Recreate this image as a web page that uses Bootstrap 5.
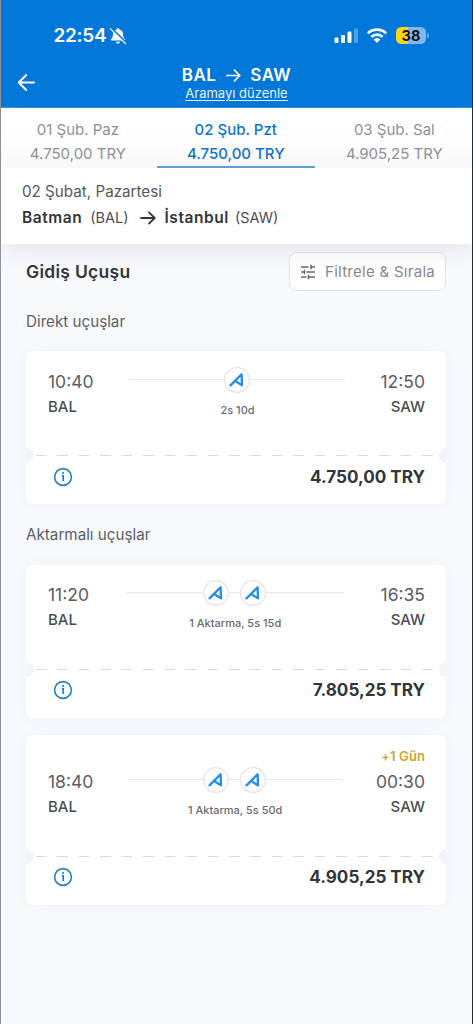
<!DOCTYPE html>
<html lang="tr">
<head>
<meta charset="utf-8">
<meta name="viewport" content="width=device-width, initial-scale=1">
<title>BAL → SAW</title>
<link rel="stylesheet" href="https://cdn.jsdelivr.net/npm/bootstrap@5.3.0/dist/css/bootstrap.min.css">
<style>
body{font-family:Inter,"Liberation Sans",sans-serif;background:#f7f9fd;color:#55575f;font-size:15px;line-height:24px}
.screen{height:1024px;border-left:1px solid #8f9197;border-right:1px solid #25282e;overflow:hidden;white-space:nowrap}
svg{display:block;flex:none}
.top-bar{height:108px;background:#0077d9;color:#fff;border-bottom:1px solid #3c8fd4}
.status-row{height:48px;padding:23px 43px 0 52.5px}
.clock{font-size:19px;font-weight:600;letter-spacing:-.3px}
.battery{width:30px;height:17px;border-radius:5.5px;background:linear-gradient(90deg,#ffd60a 39%,#7fb8ee 39%);color:#111;font-size:14.5px;font-weight:700;line-height:17px}
.battery-tip{width:2px;height:5px;border-radius:0 2px 2px 0;background:#6fb0ea;margin-left:1px}
.title-row{height:59px;padding:16px 0 0 16px}
.route{font-size:17px;font-weight:600;line-height:21px;letter-spacing:.45px}
.edit-link{font-size:13px;line-height:16px;color:#e6f3ff;text-underline-offset:2px;text-decoration-thickness:1px}
.day-tabs{height:60px;background:linear-gradient(#fff 40%,#f8f8f9)}
.day-tab{width:157.5px;padding-top:9.5px;color:#8e9098;border-bottom:2px solid transparent;font-size:15px}
.day-tab:first-child{width:156px}
.day-tab.active{color:#0e74c9;font-weight:500;border-color:#5a9fd6;width:158px}
.trip{height:76px;background:#fff;padding:12px 21px 0;box-shadow:0 3px 24px rgba(40,40,50,.12);position:relative;clip-path:inset(0 0 -40px 0)}
.trip .route-line{margin-top:2px;color:#4a4c54;font-size:14.5px}
.city{font-size:15.5px;letter-spacing:.55px}
.date{font-size:15.2px}
.dark{color:#33353c}
.results{padding:8px 26px 0 25px}
.heading{font-size:17.5px;font-weight:600;letter-spacing:.28px}
.filter-btn{width:157px;height:39px;background:#fff;border:1.5px solid #e3e4e8;border-radius:8px;color:#858790;font-size:15px;letter-spacing:.28px;padding:0 0 0 10px}
.group-label{font-size:15.2px;color:#5d5f67}
.ticket{height:153px;background:#fff;border-radius:8px;box-shadow:0 0 16px rgba(50,60,80,.045);position:relative;padding:18px 21px 0 22px}
.ticket.later{padding-top:17.5px}
.ticket.next-day{height:169.5px;padding-top:9px}
.hour{font-size:17.5px;line-height:26px;color:#5b5d65}
.port{font-size:15px;font-weight:500;line-height:24px;color:#4a4c54;margin-top:-.5px}
.plus{font-size:13px;font-weight:600;line-height:24px;color:#d1a32f;margin-bottom:1px;letter-spacing:.1px}
.path-row{height:26px;background:linear-gradient(#e6e8eb,#e6e8eb) center 12px/100% 1px no-repeat}
.duration{font-size:11px;font-weight:500;line-height:16px;color:#686a72;margin-top:9px;padding-left:1px}
.tear{position:absolute;left:10px;right:13px;bottom:48px;height:1px;background:repeating-linear-gradient(90deg,#d9dadd 0 10.5px,transparent 10.5px 21.45px)}
.notch{position:absolute;width:7.5px;height:15px;background:#f3f4f8;bottom:41px}
.notch.l{left:0;border-radius:0 8px 8px 0}.notch.r{right:0;border-radius:8px 0 0 8px}
.fare{position:absolute;left:26.5px;right:21px;bottom:15.5px;font-size:17.1px;font-weight:700;color:#33353c}
</style>
</head>
<body>
<svg width="0" height="0" class="position-absolute">
<symbol id="airline" viewBox="-13 -13 26 26"><circle r="12.4" fill="#fff" stroke="#e1e4e9" stroke-width="1.2"/><path d="M-6.500 5.400 4.600-5.800 5 5.400-1.400 1.200" fill="none" stroke="#238de9" stroke-width="2.3" stroke-linejoin="round" stroke-linecap="round"/></symbol>
<symbol id="info" viewBox="0 0 20 20"><circle cx="10" cy="10" r="8.4" fill="#fff" stroke="#277fc5" stroke-width="1.6"/><path d="M8.900 8.800H10.200V14" fill="none" stroke="#277fc5" stroke-width="1.700"/><circle cx="10" cy="6" r="1.1" fill="#277fc5"/></symbol>
<symbol id="arrow" viewBox="0 0 16 16"><path d="M1 8H14.500M9 2.300 14.700 8 9 13.700" fill="none" stroke="currentColor" stroke-width="1.8" stroke-linecap="round" stroke-linejoin="round"/></symbol>
</svg>
<main class="screen">
<header class="top-bar">
  <div class="status-row d-flex align-items-center">
    <span class="clock">22:54</span>
    <svg style="margin-left:3px" width="18" height="18" viewBox="0 0 18 18"><path d="M9 1.200c-.9 0-1.400.5-1.500 1.200C5 3.100 3.900 5 3.900 7.400c0 2.700-.8 3.600-1.800 4.700-.7.8-.3 1.500.6 1.500h12.600c.9 0 1.300-.7.6-1.500-1-1.100-1.800-2-1.800-4.700 0-2.400-1.100-4.300-3.600-5C10.400 1.700 9.900 1.200 9 1.200ZM6.700 14.700h4.600c-.3 1.100-1.200 1.800-2.300 1.800s-2-.7-2.300-1.800Z" fill="#fff"/><path d="M2.200 1.200 17 15.500" stroke="#0077d9" stroke-width="2.200"/><path d="M1.300 1.600 16.500 16.500" stroke="#e8f4ff" stroke-width="1.300" stroke-linecap="round"/></svg>
    <svg class="ms-auto" width="24" height="17" viewBox="0 0 24 17"><g fill="#fff"><rect x=".5" y="10.500" width="4" height="5.500" rx="1.200"/><rect x="7" y="8" width="4" height="8" rx="1.200"/><rect x="13.500" y="4.500" width="4" height="11.500" rx="1.200"/><rect x="20" y="1.500" width="4" height="14.500" rx="1.200" opacity=".3"/></g></svg>
    <svg style="margin-left:8px" width="22" height="17" viewBox="0 0 22 17"><path d="M1.800 6.300a13.300 13.300 0 0 1 18.400 0M5.300 9.900a8.200 8.200 0 0 1 11.400 0" fill="none" stroke="#fff" stroke-width="2.700"/><path d="M7.700 12.500a4.800 4.800 0 0 1 6.600 0L11 15.900Z" fill="#fff"/></svg>
    <div class="battery text-center" style="margin-left:8px">38</div><div class="battery-tip"></div>
  </div>
  <div class="title-row d-flex">
    <svg class="mt-2" style="transform:translateY(1px)" width="19" height="19" viewBox="0 0 19 19"><path d="M17 9.500H2M9.200 2 1.800 9.500l7.400 7.500" fill="none" stroke="#fff" stroke-width="2" stroke-linecap="round" stroke-linejoin="round"/></svg>
    <div class="flex-grow-1 text-center" style="padding-right:35px">
      <div class="route d-flex justify-content-center align-items-center" style="padding-top:1px"><span>BAL</span><svg style="margin:0 9px 0 10px" width="15" height="15"><use href="#arrow" width="15" height="15"/></svg><span>SAW</span></div>
      <a class="edit-link d-block" href="#" style="margin-top:-1px">Aramayı düzenle</a>
    </div>
  </div>
</header>
<nav class="day-tabs d-flex text-center">
  <div class="day-tab"><div style="margin-right:2px">01 Şub. Paz<br>4.750,00 TRY</div></div>
  <div class="day-tab active">02 Şub. Pzt<br>4.750,00 TRY</div>
  <div class="day-tab"><div style="margin-left:2px">03 Şub. Sal<br>4.905,25 TRY</div></div>
</nav>
<section class="trip">
  <div class="date">02 Şubat, Pazartesi</div>
  <div class="route-line d-flex align-items-center"><b class="dark fw-semibold city">Batman</b><span style="margin-left:8px">(BAL)</span><svg class="dark" style="margin:0 9px 0 11px" width="16" height="16"><use href="#arrow"/></svg><b class="dark fw-semibold city">İstanbul</b><span style="margin-left:6px">(SAW)</span></div>
</section>
<section class="results">
  <div class="d-flex justify-content-between align-items-center">
    <div class="heading dark">Gidiş Uçuşu</div>
    <button class="filter-btn d-flex align-items-center"><svg width="16" height="16" viewBox="0 0 16 16"><path d="M1 3H8.500M11 3H15M11 .8V5.200M1 8H4M6.500 8H15M4.500 5.800V10.200M1 13H6.500M9 13H15M8.500 10.800V15.200" fill="none" stroke="#666873" stroke-width="1.500"/></svg><span style="margin-left:9px">Filtrele &amp; Sırala</span></button>
  </div>
  <div class="group-label" style="margin:19px 0 17px">Direkt uçuşlar</div>

  <article class="ticket">
    <div class="d-flex">
      <div><div class="hour">10:40</div><div class="port">BAL</div></div>
      <div class="text-center mx-auto" style="width:216px;margin-top:-2px">
        <div class="path-row d-flex justify-content-center"><svg width="26" height="26"><use href="#airline"/></svg></div>
        <div class="duration">2s 10d</div>
      </div>
      <div class="text-end"><div class="hour">12:50</div><div class="port">SAW</div></div>
    </div>
    <div class="tear"></div><i class="notch l"></i><i class="notch r"></i>
    <div class="fare d-flex justify-content-between align-items-center"><svg width="20" height="20"><use href="#info"/></svg><span>4.750,00 TRY</span></div>
  </article>

  <div class="group-label" style="margin:19px 0 17.500px">Aktarmalı uçuşlar</div>

  <article class="ticket later">
    <div class="d-flex">
      <div><div class="hour">11:20</div><div class="port">BAL</div></div>
      <div class="text-center mx-auto" style="width:218px;margin-top:-2.500px">
        <div class="path-row d-flex justify-content-center" style="gap:11px"><svg width="26" height="26"><use href="#airline"/></svg><svg width="26" height="26"><use href="#airline"/></svg></div>
        <div class="duration">1 Aktarma, 5s 15d</div>
      </div>
      <div class="text-end"><div class="hour">16:35</div><div class="port">SAW</div></div>
    </div>
    <div class="tear"></div><i class="notch l"></i><i class="notch r"></i>
    <div class="fare d-flex justify-content-between align-items-center"><svg width="20" height="20"><use href="#info"/></svg><span>7.805,25 TRY</span></div>
  </article>

  <article class="ticket next-day" style="margin-top:17.500px">
    <div class="plus text-end">+1 Gün</div>
    <div class="d-flex">
      <div><div class="hour">18:40</div><div class="port">BAL</div></div>
      <div class="text-center mx-auto" style="width:214px;margin-top:-2px">
        <div class="path-row d-flex justify-content-center" style="gap:11px"><svg width="26" height="26"><use href="#airline"/></svg><svg width="26" height="26"><use href="#airline"/></svg></div>
        <div class="duration">1 Aktarma, 5s 50d</div>
      </div>
      <div class="text-end"><div class="hour">00:30</div><div class="port">SAW</div></div>
    </div>
    <div class="tear"></div><i class="notch l"></i><i class="notch r"></i>
    <div class="fare d-flex justify-content-between align-items-center"><svg width="20" height="20"><use href="#info"/></svg><span>4.905,25 TRY</span></div>
  </article>
</section>
</main>
<script src="https://cdn.jsdelivr.net/npm/bootstrap@5.3.0/dist/js/bootstrap.bundle.min.js"></script>
</body>
</html>
